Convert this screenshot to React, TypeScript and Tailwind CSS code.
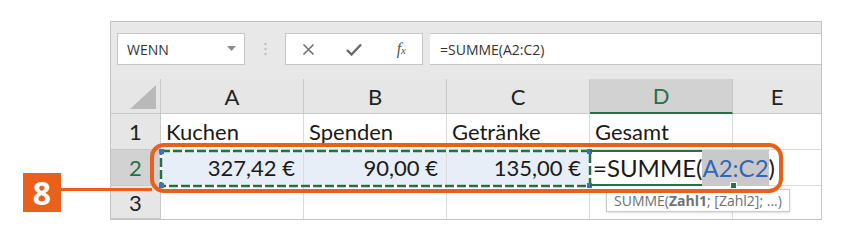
const cellFont = { fontFamily: "Lato, 'Noto Sans', sans-serif" };

const cols = ["w-[143px]", "w-[143px]", "w-[143px]", "w-[143px]"];

function RowHead({ n, active }: { n: string; active?: boolean }) {
  return (
    <div
      className={`flex w-[50px] shrink-0 items-center justify-center border-r border-b border-[#c8c8c8] text-[22px] ${
        active ? "bg-[#d2d2d2] text-[#217346]" : "bg-[#e6e6e6] text-[#222]"
      }`}
    >
      {n}
    </div>
  );
}

export default function App() {
  return (
    <div className="relative h-[243px] w-[850px] overflow-hidden bg-white">
      <div className="pl-[110px] pt-[21px]">
        <div className="flex w-[712px] flex-col border border-[#c3c3c3] bg-white" style={cellFont}>
          {/* toolbar */}
          <div
            className="flex h-[57px] items-start bg-[#e8e8e8] pt-[11px] pl-[6px]"
            style={{ fontFamily: "'Open Sans', sans-serif" }}
          >
            <div className="flex h-[32px] w-[128px] items-center justify-between border border-[#c6c6c6] bg-white pr-[8px] pl-[9px] text-[14px] text-[#333]">
              <span>WENN</span>
              <svg width="9" height="6" viewBox="0 0 9 6">
                <path d="M0 0h9L4.5 5z" fill="#8a8a8a" />
              </svg>
            </div>
            <div className="flex h-[32px] w-[40px] items-center justify-center">
              <svg width="3" height="14" viewBox="0 0 3 14">
                <circle cx="1.5" cy="2" r="1.2" fill="#c0c0c0" />
                <circle cx="1.5" cy="7" r="1.2" fill="#c0c0c0" />
                <circle cx="1.5" cy="12" r="1.2" fill="#c0c0c0" />
              </svg>
            </div>
            <div className="flex h-[32px] w-[138px] items-center border border-[#c6c6c6] bg-white">
              <div className="flex w-[46px] justify-center">
                <svg width="13" height="13" viewBox="0 0 13 13">
                  <path d="M1.5 1.5l10 10M11.5 1.5l-10 10" stroke="#707070" strokeWidth="1.6" />
                </svg>
              </div>
              <div className="flex w-[46px] justify-center">
                <svg width="16" height="13" viewBox="0 0 16 13">
                  <path d="M1 7l4.5 4.5L15 1.5" stroke="#6a6a6a" strokeWidth="2.4" fill="none" />
                </svg>
              </div>
              <div className="flex w-[46px] justify-center pl-[4px]">
                <span
                  className="text-[16px] text-[#555] italic"
                  style={{ fontFamily: "'Liberation Serif', serif" }}
                >
                  f<span className="text-[11px]">x</span>
                </span>
              </div>
            </div>
            <div className="ml-[7px] flex h-[32px] flex-1 items-center border-y border-[#c6c6c6] bg-white pl-[10px] text-[14px] text-[#333]">
              =SUMME(A2:C2)
            </div>
          </div>

          {/* column header */}
          <div className="flex h-[35px] bg-[#e6e6e6] text-[22px] text-[#222]">
            <div className="relative w-[50px] shrink-0 border-r border-b border-[#c8c8c8]">
              <svg className="absolute right-[4px] bottom-[4px]" width="26" height="24" viewBox="0 0 26 24">
                <path d="M26 0V24H0z" fill="#b9b9b9" />
              </svg>
            </div>
            {["A", "B", "C"].map((c, i) => (
              <div
                key={c}
                className={`${cols[i]} flex shrink-0 items-center justify-center border-r border-b border-[#c8c8c8]`}
              >
                {c}
              </div>
            ))}
            <div className="flex w-[143px] shrink-0 items-center justify-center border-r border-b-2 border-r-[#c8c8c8] border-b-[#217346] bg-[#d2d2d2] text-[#217346]">
              D
            </div>
            <div className="flex flex-1 items-center justify-center border-b border-[#c8c8c8]">E</div>
          </div>

          {/* row 1 */}
          <div className="flex h-[36px] text-[22px] text-[#1a1a1a]">
            <RowHead n="1" />
            {["Kuchen", "Spenden", "Getränke", "Gesamt"].map((t, i) => (
              <div
                key={t}
                className={`${cols[i]} flex shrink-0 items-end border-r border-b border-[#dadada] pb-[1px] pl-[5px]`}
              >
                {t}
              </div>
            ))}
            <div className="flex-1 border-b border-[#dadada]" />
          </div>

          {/* row 2 */}
          <div className="flex h-[36px] text-[22px] text-[#1a1a1a]">
            <RowHead n="2" active />
            {["327,42 €", "90,00 €", "135,00 €"].map((t, i) => (
              <div
                key={t}
                className={`${cols[i]} flex shrink-0 items-center justify-end border-r border-b border-[#dadada] bg-[#e7eef8] pr-[8px]`}
              >
                {t}
              </div>
            ))}
            <div className="relative z-10 flex w-[143px] shrink-0 items-center overflow-visible border-y-2 border-[#217346] pl-[3px] text-[24px] whitespace-nowrap">
              <span>=SUMME(</span>
              <span className="bg-[#c9c9c9] text-[#3466b8]">A2:C2</span>
              <span>)</span>
              <div className="absolute right-[-4px] bottom-[-5px] h-[7px] w-[7px] border border-white bg-[#217346]" />
            </div>
            <div className="flex-1 border-b border-[#dadada]" />
          </div>

          {/* row 3 */}
          <div className="flex h-[33px] text-[22px]">
            <RowHead n="3" />
            {cols.map((w, i) => (
              <div key={i} className={`${w} shrink-0 border-r border-[#dadada]`} />
            ))}
            <div className="flex-1" />
          </div>
        </div>
      </div>

      {/* marching ants around A2:C2 */}
      <svg className="absolute top-[149px] left-[159px]" width="433" height="40" viewBox="0 0 433 40">
        <rect x="2" y="2" width="429" height="35" fill="none" stroke="#ffffff" strokeWidth="2.5" />
        <rect
          x="2"
          y="2"
          width="429"
          height="35"
          fill="none"
          stroke="#217346"
          strokeWidth="2.5"
          strokeDasharray="9 3"
        />
        <rect x="0" y="0" width="5" height="5" fill="#3d6ec9" />
        <rect x="428" y="0" width="5" height="5" fill="#3d6ec9" />
        <rect x="0" y="34" width="5" height="5" fill="#3d6ec9" />
        <rect x="428" y="34" width="5" height="5" fill="#3d6ec9" />
      </svg>

      {/* tooltip */}
      <div
        className="absolute top-[189px] left-[606px] z-20 flex h-[23px] items-center border border-[#c8c8c8] bg-white px-[7px] text-[14px] text-[#707070] shadow-sm"
        style={{ fontFamily: "'Open Sans', sans-serif" }}
      >
        SUMME(<b className="font-bold">Zahl1</b>; [Zahl2]; ...)
      </div>

      {/* orange callout */}
      <div className="absolute top-[143px] left-[150px] z-30 h-[50px] w-[633px] rounded-[14px] border-4 border-[#e8601c]" />
      <div className="absolute top-[188px] left-[60px] z-30 h-[3px] w-[92px] bg-[#e8601c]" />
      <div
        className="absolute top-[173px] left-[23px] z-30 flex h-[39px] w-[38px] items-center justify-center bg-[#e8601c] text-[32px] font-bold text-white"
        style={{ fontFamily: "'Open Sans', sans-serif" }}
      >
        8
      </div>
    </div>
  );
}
